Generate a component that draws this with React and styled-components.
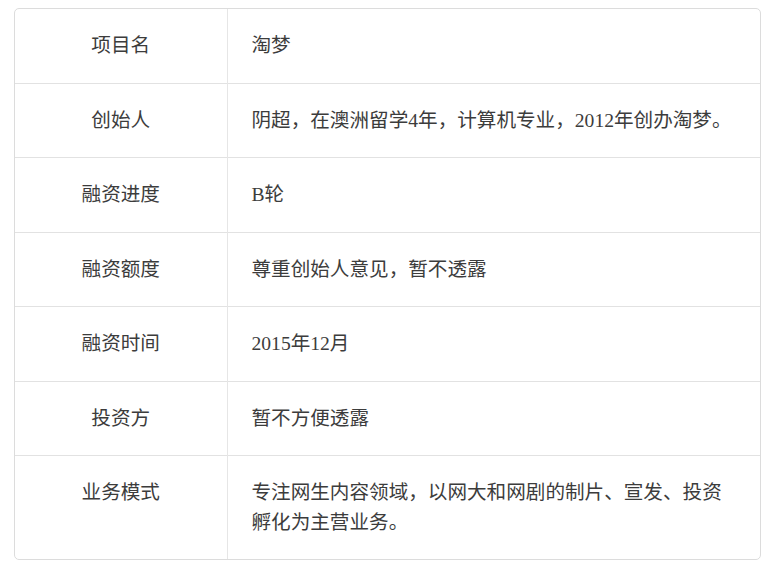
import React from 'react'
import styled, { createGlobalStyle } from 'styled-components'

const rows = [
  ['项目名', '淘梦'],
  ['创始人', '阴超，在澳洲留学4年，计算机专业，2012年创办淘梦。'],
  ['融资进度', 'B轮'],
  ['融资额度', '尊重创始人意见，暂不透露'],
  ['融资时间', '2015年12月'],
  ['投资方', '暂不方便透露'],
  ['业务模式', '专注网生内容领域，以网大和网剧的制片、宣发、投资孵化为主营业务。'],
]

const GlobalStyle = createGlobalStyle`
  body {
    margin: 0;
    background: #fff;
    font-family: "Liberation Serif", "Noto Sans CJK SC", serif;
  }
`

const Page = styled.div`
  padding: 8px 14px 0 14px;
`

const Card = styled.div`
  width: 747px;
  box-sizing: border-box;
  border: 1px solid #dcdcdc;
  border-radius: 5px;
  overflow: hidden;
`

const Table = styled.table`
  width: 100%;
  border-collapse: collapse;
  table-layout: fixed;
`

const Row = styled.tr`
  & + & td {
    border-top: 1px solid #e2e2e2;
  }
`

const Cell = styled.td`
  box-sizing: border-box;
  padding: ${p => (p.$head ? '22px 12px' : '22px 26px 22px 24px')};
  font-size: 19.6px;
  line-height: 29.5px;
  color: #3c3c3c;
  vertical-align: top;
  text-align: ${p => (p.$head ? 'center' : 'left')};
  width: ${p => (p.$head ? '212px' : 'auto')};
  border-right: ${p => (p.$head ? '1px solid #e6e6e6' : 'none')};
`

const App = () => {
  return (
    <Page>
      <GlobalStyle />
      <Card>
        <Table>
          <tbody>
            {rows.map(([k, v]) => (
              <Row key={k}>
                <Cell $head>{k}</Cell>
                <Cell>{v}</Cell>
              </Row>
            ))}
          </tbody>
        </Table>
      </Card>
    </Page>
  )
}

export default App
